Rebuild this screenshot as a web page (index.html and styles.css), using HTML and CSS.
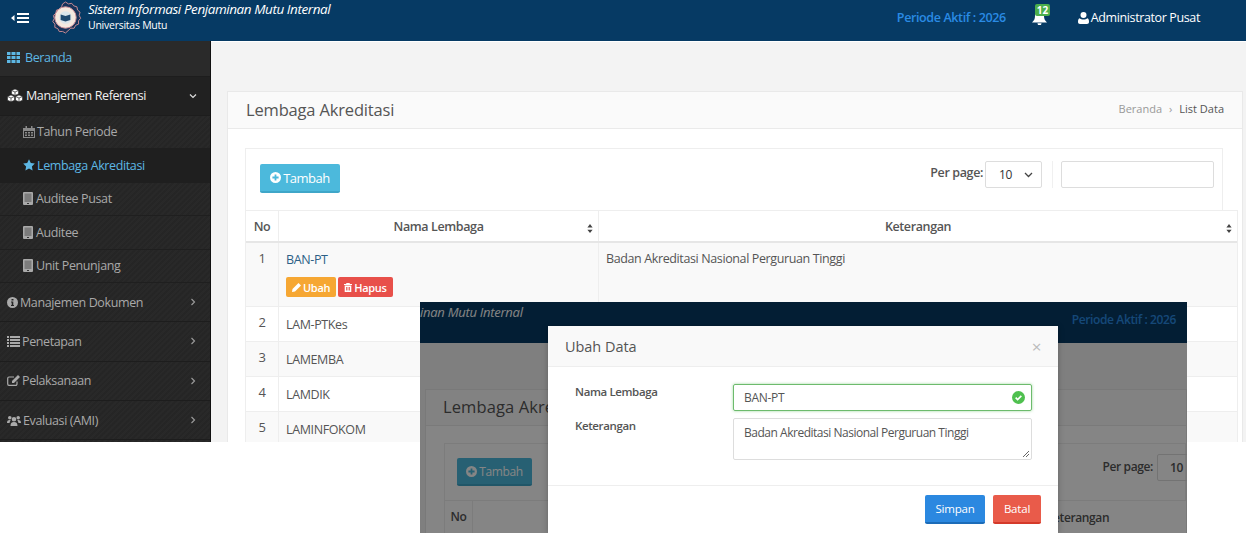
FILE: index.html
```html
<!DOCTYPE html>
<html lang="id">
<head>
<meta charset="utf-8">
<title>Lembaga Akreditasi</title>
<link rel="stylesheet" href="styles.css">
</head>
<body>
<svg class="defs" width="0" height="0" aria-hidden="true">
  <symbol id="i-check" viewBox="0 0 16 16"><circle cx="8" cy="8" r="8" fill="#4fc04f"/><path d="M4.5 8.200l2.400 2.400 4.600-4.600" fill="none" stroke="#fff" stroke-width="2"/></symbol>
  <symbol id="i-plus" viewBox="0 0 16 16"><path fill="currentColor" fill-rule="evenodd" d="M8 0a8 8 0 1 0 0 16A8 8 0 0 0 8 0zM6.700 3.500h2.600v3.200h3.200v2.600H9.300v3.200H6.700V9.300H3.500V6.700h3.200z"/></symbol>
  <symbol id="i-book" viewBox="0 0 10 13"><path fill="#a9a9a9" d="M1 0h8a1 1 0 0 1 1 1v11a1 1 0 0 1-1 1H1a1 1 0 0 1-1-1V1a1 1 0 0 1 1-1z"/><path fill="#7c7c7c" d="M1.500 1.500h7v8.500h-7z"/><path fill="#333" d="M4 11h2v1H4z"/></symbol>
  <symbol id="i-right" viewBox="0 0 8 10"><path d="M2.500 2l3 3-3 3" fill="none" stroke="currentColor" stroke-width="1.200"/></symbol>
  <symbol id="i-sort" viewBox="0 0 8 12"><path fill="currentColor" d="M4 0l3.500 4.500h-7zM4 12L.5 7.500h7z"/></symbol>
</svg>

<div class="app">
  <header class="topbar">
    <svg class="toggle" width="20" height="12" viewBox="0 0 20 12" aria-hidden="true"><path fill="#fff" d="M0 6l3.500-3v6zM6 1h12v2H6zM6 5h12v2H6zM6 9h12v2H6z"/></svg>
    <svg class="logo" width="33" height="33" viewBox="0 0 34 34" aria-hidden="true"><path fill="#17335a" stroke="#c98b94" stroke-width="1" d="M17 1l3 2 3.500-.6 2 2.600 3.300 1 .6 3.300 2.600 2.200-.9 3.300 1.500 3-2.200 2.600.1 3.400-3.100 1.300-1.500 3-3.400-.1L17 33l-3-1.600-3.400.1-1.500-3-3.100-1.300.1-3.400-2.200-2.600 1.500-3-.9-3.300 2.600-2.200.6-3.300 3.300-1 2-2.600L14 3z"/><circle cx="17" cy="17" r="11" fill="#f4e9df" stroke="#c98b94"/><circle cx="17" cy="17" r="6.500" fill="#dbe6ea"/><path fill="#1f4a6e" d="M12 14l5 1.500 5-1.500v5.500l-5 1.500-5-1.500z"/></svg>
    <div class="brand">
      <span class="brand-title">Sistem Informasi Penjaminan Mutu Internal</span>
      <span class="brand-sub">Universitas Mutu</span>
    </div>
    <span class="periode">Periode Aktif : 2026</span>
    <span class="bell">
      <svg width="15" height="14" viewBox="0 0 15 14" aria-hidden="true"><path fill="#fff" d="M7.500 0c3 0 4.500 2.300 4.500 5 0 3 1 4.500 3 6.500H0c2-2 3-3.500 3-6.500 0-2.700 1.500-5 4.500-5zM5.500 12.300h4a2 2 0 0 1-4 0z"/></svg>
      <b class="badge">12</b>
    </span>
    <span class="user">
      <svg width="11" height="12" viewBox="0 0 11 12" aria-hidden="true"><path fill="#fff" d="M5.500 0a3 3 0 1 1 0 6 3 3 0 0 1 0-6zM1.500 6.300c1 .9 2.500 1.200 4 1.200s3-.3 4-1.200c1 .3 1.500 1.700 1.500 3.700 0 1.300-.8 2-2 2H2c-1.200 0-2-.7-2-2 0-2 .5-3.400 1.500-3.700z"/></svg>
      Administrator Pusat
    </span>
  </header>

  <div class="shell">
    <nav class="sidebar">
      <a class="nav-item nav-home">
        <svg class="nav-ico" width="13" height="11" viewBox="0 0 13 11" aria-hidden="true"><path fill="#5db7e4" d="M0 0h3.500v3H0zM4.500 0h4v3h-4zM9.500 0H13v3H9.500zM0 4h3.500v3H0zM4.500 4h4v3h-4zM9.500 4H13v3H9.500zM0 8h3.500v3H0zM4.500 8h4v3h-4zM9.500 8H13v3H9.500z"/></svg>
        Beranda
      </a>
      <a class="nav-item nav-open">
        <svg class="nav-ico" width="16" height="13" viewBox="0 0 16 13" aria-hidden="true"><path fill="#fff" stroke="#262626" stroke-width=".6" d="M8 0l3.500 1.500v3.400L8 6.400 4.500 4.900V1.500zM4 6l3.500 1.500v3.800L4 12.800.5 11.300V7.500zM12 6l3.500 1.500v3.800L12 12.800l-3.500-1.500V7.500z"/><path fill="none" stroke="#262626" stroke-width=".7" d="M4.500 1.500L8 3l3.500-1.500M8 3v3.400M.5 7.500L4 9l3.500-1.500M4 9v3.800M8.500 7.500L12 9l3.500-1.500M12 9v3.800"/></svg>
        Manajemen Referensi
        <svg class="caret" width="8" height="6" viewBox="0 0 8 6" aria-hidden="true"><path d="M1 1.500l3 3 3-3" fill="none" stroke="#ddd" stroke-width="1.200"/></svg>
      </a>
      <a class="sub-item">
        <svg width="12" height="12" viewBox="0 0 12 12" aria-hidden="true"><path fill="#8a8a8a" fill-rule="evenodd" d="M0 2h2.500V0h1.500v2h4V0h1.500v2H12v10H0zm1 3v6h10V5zm1 1h2v1.500H2zm3 0h2v1.500H5zm3 0h2v1.500H8zM2 8.500h2V10H2zm3 0h2V10H5zm3 0h2V10H8z"/></svg>
        Tahun Periode
      </a>
      <a class="sub-item sub-active">
        <svg width="12" height="12" viewBox="0 0 12 12" aria-hidden="true"><path fill="#5db7e4" d="M6 .3l1.800 3.700 4 .6-2.900 2.800.7 4L6 9.500l-3.600 1.900.7-4L.2 4.600l4-.6z"/></svg>
        Lembaga Akreditasi
      </a>
      <a class="sub-item"><svg class="ico-book" width="10" height="13" aria-hidden="true"><use href="#i-book"/></svg>Auditee Pusat</a>
      <a class="sub-item"><svg class="ico-book" width="10" height="13" aria-hidden="true"><use href="#i-book"/></svg>Auditee</a>
      <a class="sub-item"><svg class="ico-book" width="10" height="13" aria-hidden="true"><use href="#i-book"/></svg>Unit Penunjang</a>
      <a class="nav-item">
        <svg class="nav-ico" width="11" height="11" viewBox="0 0 11 11" aria-hidden="true"><path fill="#aaa" fill-rule="evenodd" d="M5.500 0a5.500 5.500 0 1 1 0 11 5.500 5.500 0 0 1 0-11zM4.500 2v1.500h2V2zm-.5 2.500v1h.7V8H4v1h3V8h-.7V4.500z"/></svg>
        Manajemen Dokumen
        <svg class="chev" width="8" height="10" aria-hidden="true"><use href="#i-right"/></svg>
      </a>
      <a class="nav-item">
        <svg class="nav-ico" width="13" height="11" viewBox="0 0 13 11" aria-hidden="true"><path fill="#aaa" d="M0 0h2v2H0zM3 0h10v2H3zM0 3h2v2H0zM3 3h10v2H3zM0 6h2v2H0zM3 6h10v2H3zM0 9h2v2H0zM3 9h10v2H3z"/></svg>
        Penetapan
        <svg class="chev" width="8" height="10" aria-hidden="true"><use href="#i-right"/></svg>
      </a>
      <a class="nav-item">
        <svg class="nav-ico" width="13" height="11" viewBox="0 0 13 11" aria-hidden="true"><path fill="none" stroke="#aaa" stroke-width="1.200" d="M10 6.500V9a1.400 1.400 0 0 1-1.400 1.400H2A1.400 1.400 0 0 1 .7 9V3.400A1.400 1.400 0 0 1 2 2h5"/><path fill="#aaa" d="M11 0l2 2-6 6H5V6z"/></svg>
        Pelaksanaan
        <svg class="chev" width="8" height="10" aria-hidden="true"><use href="#i-right"/></svg>
      </a>
      <a class="nav-item">
        <svg class="nav-ico" width="14" height="11" viewBox="0 0 14 11" aria-hidden="true"><path fill="#aaa" d="M7 2a2.300 2.300 0 1 1 0 4.600A2.300 2.300 0 0 1 7 2zM2.800 1a1.800 1.800 0 1 1 0 3.600 1.800 1.800 0 0 1 0-3.600zM11.200 1a1.800 1.800 0 1 1 0 3.600 1.800 1.800 0 0 1 0-3.600zM3.500 11c0-2.500.8-4 3.500-4s3.500 1.500 3.500 4zM0 8c0-1.800.6-3 2.800-3 .4 0 .6.300 1 .6C3 6.300 2.700 7 2.600 8zM14 8c0-1.800-.6-3-2.800-3-.4 0-.6.300-1 .6.800.7 1.100 1.400 1.200 2.400z"/></svg>
        Evaluasi (AMI)
        <svg class="chev" width="8" height="10" aria-hidden="true"><use href="#i-right"/></svg>
      </a>
    </nav>

    <main class="content">
      <section class="card">
        <div class="card-head">
          <h1 class="card-title">Lembaga Akreditasi</h1>
          <div class="crumbs"><span>Beranda</span><i>&rsaquo;</i><em>List Data</em></div>
        </div>
        <div class="card-body">
          <div class="toolbar">
            <button class="btn-add" type="button"><svg width="11" height="11" aria-hidden="true"><use href="#i-plus"/></svg>Tambah</button>
            <div class="tools">
              <label class="perpage">Per page:</label>
              <div class="select">10<svg width="9" height="6" viewBox="0 0 9 6" aria-hidden="true"><path d="M1 1l3.500 3.500L8 1" fill="none" stroke="#444" stroke-width="1.300"/></svg></div>
              <span class="tool-sep"></span>
              <div class="search"></div>
            </div>
          </div>
          <div class="tbl">
            <div class="tr th">
              <div class="c-no">No</div>
              <div class="c-name">Nama Lembaga<svg class="sort" width="6" height="9" aria-hidden="true"><use href="#i-sort"/></svg></div>
              <div class="c-desc">Keterangan<svg class="sort" width="6" height="9" aria-hidden="true"><use href="#i-sort"/></svg></div>
            </div>
            <div class="tr row-first">
              <div class="c-no">1</div>
              <div class="c-name">
                <a class="link">BAN-PT</a>
                <div class="actions">
                  <span class="mini mini-edit"><svg width="9" height="9" viewBox="0 0 9 9" aria-hidden="true"><path fill="#fff" d="M6.500 0L9 2.500 3 8.500 0 9l.5-3z"/></svg>Ubah</span>
                  <span class="mini mini-del"><svg width="8" height="9" viewBox="0 0 8 9" aria-hidden="true"><path fill="#fff" fill-rule="evenodd" d="M2.500 0h3L6 1h2v1H0V1h2zM.7 2.600h6.600V9H.7zM2 4v3.500h.8V4zm1.600 0v3.500h.8V4zm1.600 0v3.500H6V4z"/></svg>Hapus</span>
                </div>
              </div>
              <div class="c-desc">Badan Akreditasi Nasional Perguruan Tinggi</div>
            </div>
            <div class="tr row"><div class="c-no">2</div><div class="c-name">LAM-PTKes</div><div class="c-desc"></div></div>
            <div class="tr row alt"><div class="c-no">3</div><div class="c-name">LAMEMBA</div><div class="c-desc"></div></div>
            <div class="tr row"><div class="c-no">4</div><div class="c-name">LAMDIK</div><div class="c-desc"></div></div>
            <div class="tr row alt"><div class="c-no">5</div><div class="c-name">LAMINFOKOM</div><div class="c-desc"></div></div>
          </div>
        </div>
      </section>
    </main>
  </div>
</div>

<div class="shot">
  <div class="shot-top">
    <span class="shot-title">inan Mutu Internal</span>
    <span class="shot-periode">Periode Aktif : 2026</span>
  </div>
  <div class="shot-page">
    <div class="shot-card">
      <div class="shot-head">Lembaga Akre</div>
      <div class="shot-body">
        <div class="shot-tools">
          <span class="shot-add"><svg width="11" height="11" aria-hidden="true"><use href="#i-plus"/></svg>Tambah</span>
          <span class="shot-perpage">Per page:<span class="shot-select">10</span></span>
        </div>
        <div class="shot-th"><span class="shot-no">No</span><span class="shot-ket">eterangan</span></div>
      </div>
    </div>
  </div>
  <div class="backdrop"></div>
  <div class="modal">
    <div class="modal-head"><h2 class="modal-title">Ubah Data</h2><span class="modal-close">&times;</span></div>
    <div class="modal-body">
      <div class="form-row">
        <label class="form-label">Nama Lembaga</label>
        <div class="input input-ok">BAN-PT<svg width="13" height="13" aria-hidden="true"><use href="#i-check"/></svg></div>
      </div>
      <div class="form-row">
        <label class="form-label">Keterangan</label>
        <div class="input area">Badan Akreditasi Nasional Perguruan Tinggi
          <svg class="grip" width="6" height="6" viewBox="0 0 6 6" aria-hidden="true"><path d="M0 6l6-6M3 6l3-3" stroke="#666" fill="none"/></svg>
        </div>
      </div>
    </div>
    <div class="modal-foot">
      <button class="mbtn mbtn-save" type="button">Simpan</button>
      <button class="mbtn mbtn-cancel" type="button">Batal</button>
    </div>
  </div>
</div>
</body>
</html>
```

FILE: styles.css
```css
* { box-sizing: border-box; }
html, body { margin: 0; padding: 0; }
body {
  width: 1250px;
  height: 533px;
  position: relative;
  overflow: hidden;
  background: #fff;
  font-family: "Open Sans", "Noto Sans", sans-serif;
  font-size: 12.500px;
  letter-spacing: -.38px;
  color: #555;
}
.defs { position: absolute; }
.app { width: 1246px; height: 442px; overflow: hidden; display: flex; flex-direction: column; }

.topbar { height: 41px; flex: none; display: flex; align-items: center; background: #063a64; color: #fff; padding: 0 0 6px 11px; }
.toggle { flex: none; margin-right: 18px; }
.logo { flex: none; margin-right: 6px; }
.brand { display: flex; flex-direction: column; margin-top: -2px; }
.brand-title { font-style: italic; font-size: 13.500px; line-height: 17px; letter-spacing: -.43px; }
.brand-sub { font-size: 10.500px; line-height: 14px; letter-spacing: -.25px; }
.periode { margin-left: auto; color: #2a8be4; font-size: 12.500px; font-weight: 600; }
.bell { position: relative; margin-left: 26px; width: 15px; height: 14px; display: block; }
.bell svg { display: block; }
.badge { position: absolute; left: 3px; top: -7px; background: #4cae4c; color: #fff; font-size: 10px; line-height: 12px; padding: 0 2px; border-radius: 2px; font-weight: 700; letter-spacing: 0; }
.user { margin-left: 31px; margin-right: 46px; display: flex; align-items: center; gap: 2px; font-size: 12.500px; font-weight: 500; }

.shell { flex: 1; display: flex; min-height: 0; }
.sidebar {
  width: 211px; flex: none; overflow: hidden; color: #a9a9a9; border-right: 1px solid #111;
  background-color: #262626;
  background-image: repeating-linear-gradient(135deg, rgba(255,255,255,.012) 0 2px, rgba(0,0,0,.02) 2px 4px);
}
.sidebar a { display: flex; align-items: center; }
.nav-item { height: 39.300px; padding: 0 13px 0 7px; border-bottom: 1px solid #1d1d1d; gap: 2px; }
.nav-ico { flex: none; }
.nav-home { height: 36px; padding-bottom: 3px; color: #5db7e4; gap: 5px; background: #2a2a2a; }
.nav-open { height: 38.500px; color: #f0f0f0; gap: 3px; background: #212121; }
.caret { margin-left: auto; }
.chev { margin-left: auto; color: #999; }
.sub-item { height: 33.500px; padding-left: 23px; gap: 2px; border-bottom: 1px solid #1f1f1f; }
.sub-active { color: #5db7e4; background: #1f1f1f; }
.ico-book { margin-right: 1px; }

.content { flex: 1; min-width: 0; padding: 49px 3px 0 16px; background: #f3f3f3; border-top: 1px solid #fff; }
.card { background: #fff; border: 1px solid #e9e9e9; height: 360px; }
.card-head { height: 37px; display: flex; align-items: center; justify-content: space-between; background: #fafafa; border-bottom: 1px solid #eaeaea; padding: 0 18px 3px 18px; }
.card-title { margin: 0; font-size: 16.500px; font-weight: 400; color: #555; letter-spacing: -.17px; padding-top: 2px; }
.crumbs { display: flex; gap: 7px; font-size: 11px; color: #999; letter-spacing: 0; }
.crumbs i { font-style: normal; }
.crumbs em { font-style: normal; color: #555; }
.card-body { padding: 19px 4px 0 17px; position: relative; }
.toolbar { width: 978px; height: 63px; border: 1px solid #eee; border-bottom: 0; display: flex; justify-content: space-between; padding: 15px 8px 0 14px; }
.btn-add { width: 80px; height: 29px; background: #4cb9dc; border: 0; border-bottom: 2px solid #3fa6c8; border-radius: 2px; color: #fff; font: 500 13px "Open Sans", sans-serif; letter-spacing: -.5px; display: flex; align-items: center; justify-content: center; gap: 2px; padding: 0; }
.tools { display: flex; align-items: flex-start; margin-top: -3px; }
.perpage { font-weight: 600; margin-right: 2px; line-height: 24px; color: #555; }
.select { width: 57px; height: 27px; border: 1px solid #ddd; border-radius: 2px; padding: 0 8px 0 13px; display: flex; align-items: center; justify-content: space-between; font-size: 12px; color: #333; }
.tool-sep { width: 1px; height: 27px; margin: 0 8px 0 10px; background: #f0f0f0; }
.search { width: 153px; height: 27px; border: 1px solid #ddd; border-radius: 2px; }

.tbl { width: 993px; border: 1px solid #eee; border-top: 0; margin-top: -1px; position: relative; }
.tr { display: grid; grid-template-columns: 32px 320px 1fr; border-bottom: 1px solid #eee; color: #555; background: #fff; }
.tr > div + div { border-left: 1px solid #eee; }
.th { height: 33px; font-weight: 600; border-top: 1px solid #eee; border-bottom: 2px solid #e6e6e6; }
.th > div { display: flex; align-items: center; justify-content: center; position: relative; }
.sort { position: absolute; right: 5px; top: 13px; color: #444; }
.row-first { height: 64px; background: #f9f9f9; }
.row-first .c-no, .row .c-no { text-align: center; font-size: 13px; padding-top: 6px; }
.row-first .c-name { padding: 8px 7px; }
.row-first .c-desc { padding: 7px 7px; }
.row { height: 35px; }
.row .c-name { padding: 9px 7px; }
.alt { background: #f9f9f9; }
.link { color: #2c5f86; display: block; line-height: 17px; }
.actions { display: flex; gap: 2px; margin-top: 9px; }
.mini { height: 20px; display: flex; align-items: center; gap: 2px; padding: 0 6px; border-radius: 2px; color: #fff; font-size: 11px; font-weight: 600; letter-spacing: -.3px; }
.mini-edit { background: #f6a733; }
.mini-del { background: #e8504a; }

.shot { position: absolute; left: 420px; top: 302px; width: 767px; height: 231px; overflow: hidden; background: #fff; font-size: 12px; }
.shot-top { height: 41px; background: #063a64; display: flex; justify-content: space-between; padding: 3px 11px 0 0; }
.shot-title { font-style: italic; font-size: 13px; color: #fff; white-space: nowrap; line-height: 14px; letter-spacing: -.27px; }
.shot-periode { color: #2a8be4; font-weight: 600; line-height: 30px; }
.shot-page { height: 190px; background: #f4f4f4; padding: 46px 0 0 5px; }
.shot-card { background: #fff; border: 1px solid #e9e9e9; height: 160px; }
.shot-head { height: 36px; line-height: 34px; background: #fafafa; border-bottom: 1px solid #eaeaea; padding-left: 17px; font-size: 16.500px; color: #555; letter-spacing: .1px; }
.shot-body { padding: 17px 0 0 18px; }
.shot-tools { height: 58px; border: 1px solid #eee; border-bottom: 1px solid #eee; display: flex; justify-content: space-between; padding: 14px 0 0 12px; }
.shot-add { width: 75px; height: 28px; background: #4cb9dc; border-bottom: 2px solid #3fa6c8; border-radius: 2px; color: #fff; font-weight: 500; display: flex; align-items: center; justify-content: center; gap: 2px; }
.shot-perpage { font-weight: 600; display: flex; gap: 4px; align-items: flex-start; margin-top: -4px; line-height: 26px; }
.shot-select { width: 50px; height: 27px; border: 1px solid #ddd; border-radius: 2px; padding-left: 12px; font-size: 12px; margin-right: -22px; }
.shot-th { display: flex; height: 32px; align-items: center; border-left: 1px solid #eee; font-weight: 600; }
.shot-no { width: 28px; text-align: center; border-right: 1px solid #eee; line-height: 32px; }
.shot-ket { margin-left: 580px; white-space: nowrap; }
.backdrop { position: absolute; inset: 0; background: rgba(0,0,0,.48); }

.modal { position: absolute; left: 128px; top: 24px; width: 510px; height: 207px; background: #fff; box-shadow: 0 1px 6px rgba(0,0,0,.25); }
.modal-head { height: 41px; background: #f9f9f9; border-bottom: 1px solid #eee; display: flex; align-items: center; justify-content: space-between; padding: 0 17px; }
.modal-title { margin: 0; font-size: 14.500px; font-weight: 400; color: #555; letter-spacing: -.05px; }
.modal-close { color: #bbb; font-size: 17px; line-height: 1; }
.modal-body { height: 119px; padding: 17px 26px 0 27px; border-bottom: 1px solid #eee; }
.form-row { display: flex; margin-bottom: 7px; }
.form-label { width: 158px; font-size: 11.500px; font-weight: 600; color: #555; line-height: 16px; }
.input { width: 299px; height: 27px; border: 1px solid #ddd; border-radius: 2px; padding: 0 10px; font-size: 12px; display: flex; align-items: center; justify-content: space-between; color: #555; line-height: 16px; letter-spacing: -.48px; }
.input-ok { border: 1.500px solid #6dbb6d; box-shadow: 0 0 3px rgba(90,190,90,.6); padding-right: 6px; letter-spacing: -.3px; }
.area { height: 42px; align-items: flex-start; padding-top: 6px; position: relative; }
.grip { position: absolute; right: 2px; bottom: 2px; }
.modal-foot { display: flex; justify-content: flex-end; gap: 8px; padding: 9px 17px 0 0; }
.mbtn { height: 29px; border: 0; border-radius: 2px; color: #fff; font: 500 11.500px "Open Sans", sans-serif; letter-spacing: -.2px; padding: 0; }
.mbtn-save { width: 60px; background: #2b88e0; border-bottom: 2px solid #1c6cb8; }
.mbtn-cancel { width: 48px; background: #e95b4a; border-bottom: 2px solid #d43a2a; }
```
